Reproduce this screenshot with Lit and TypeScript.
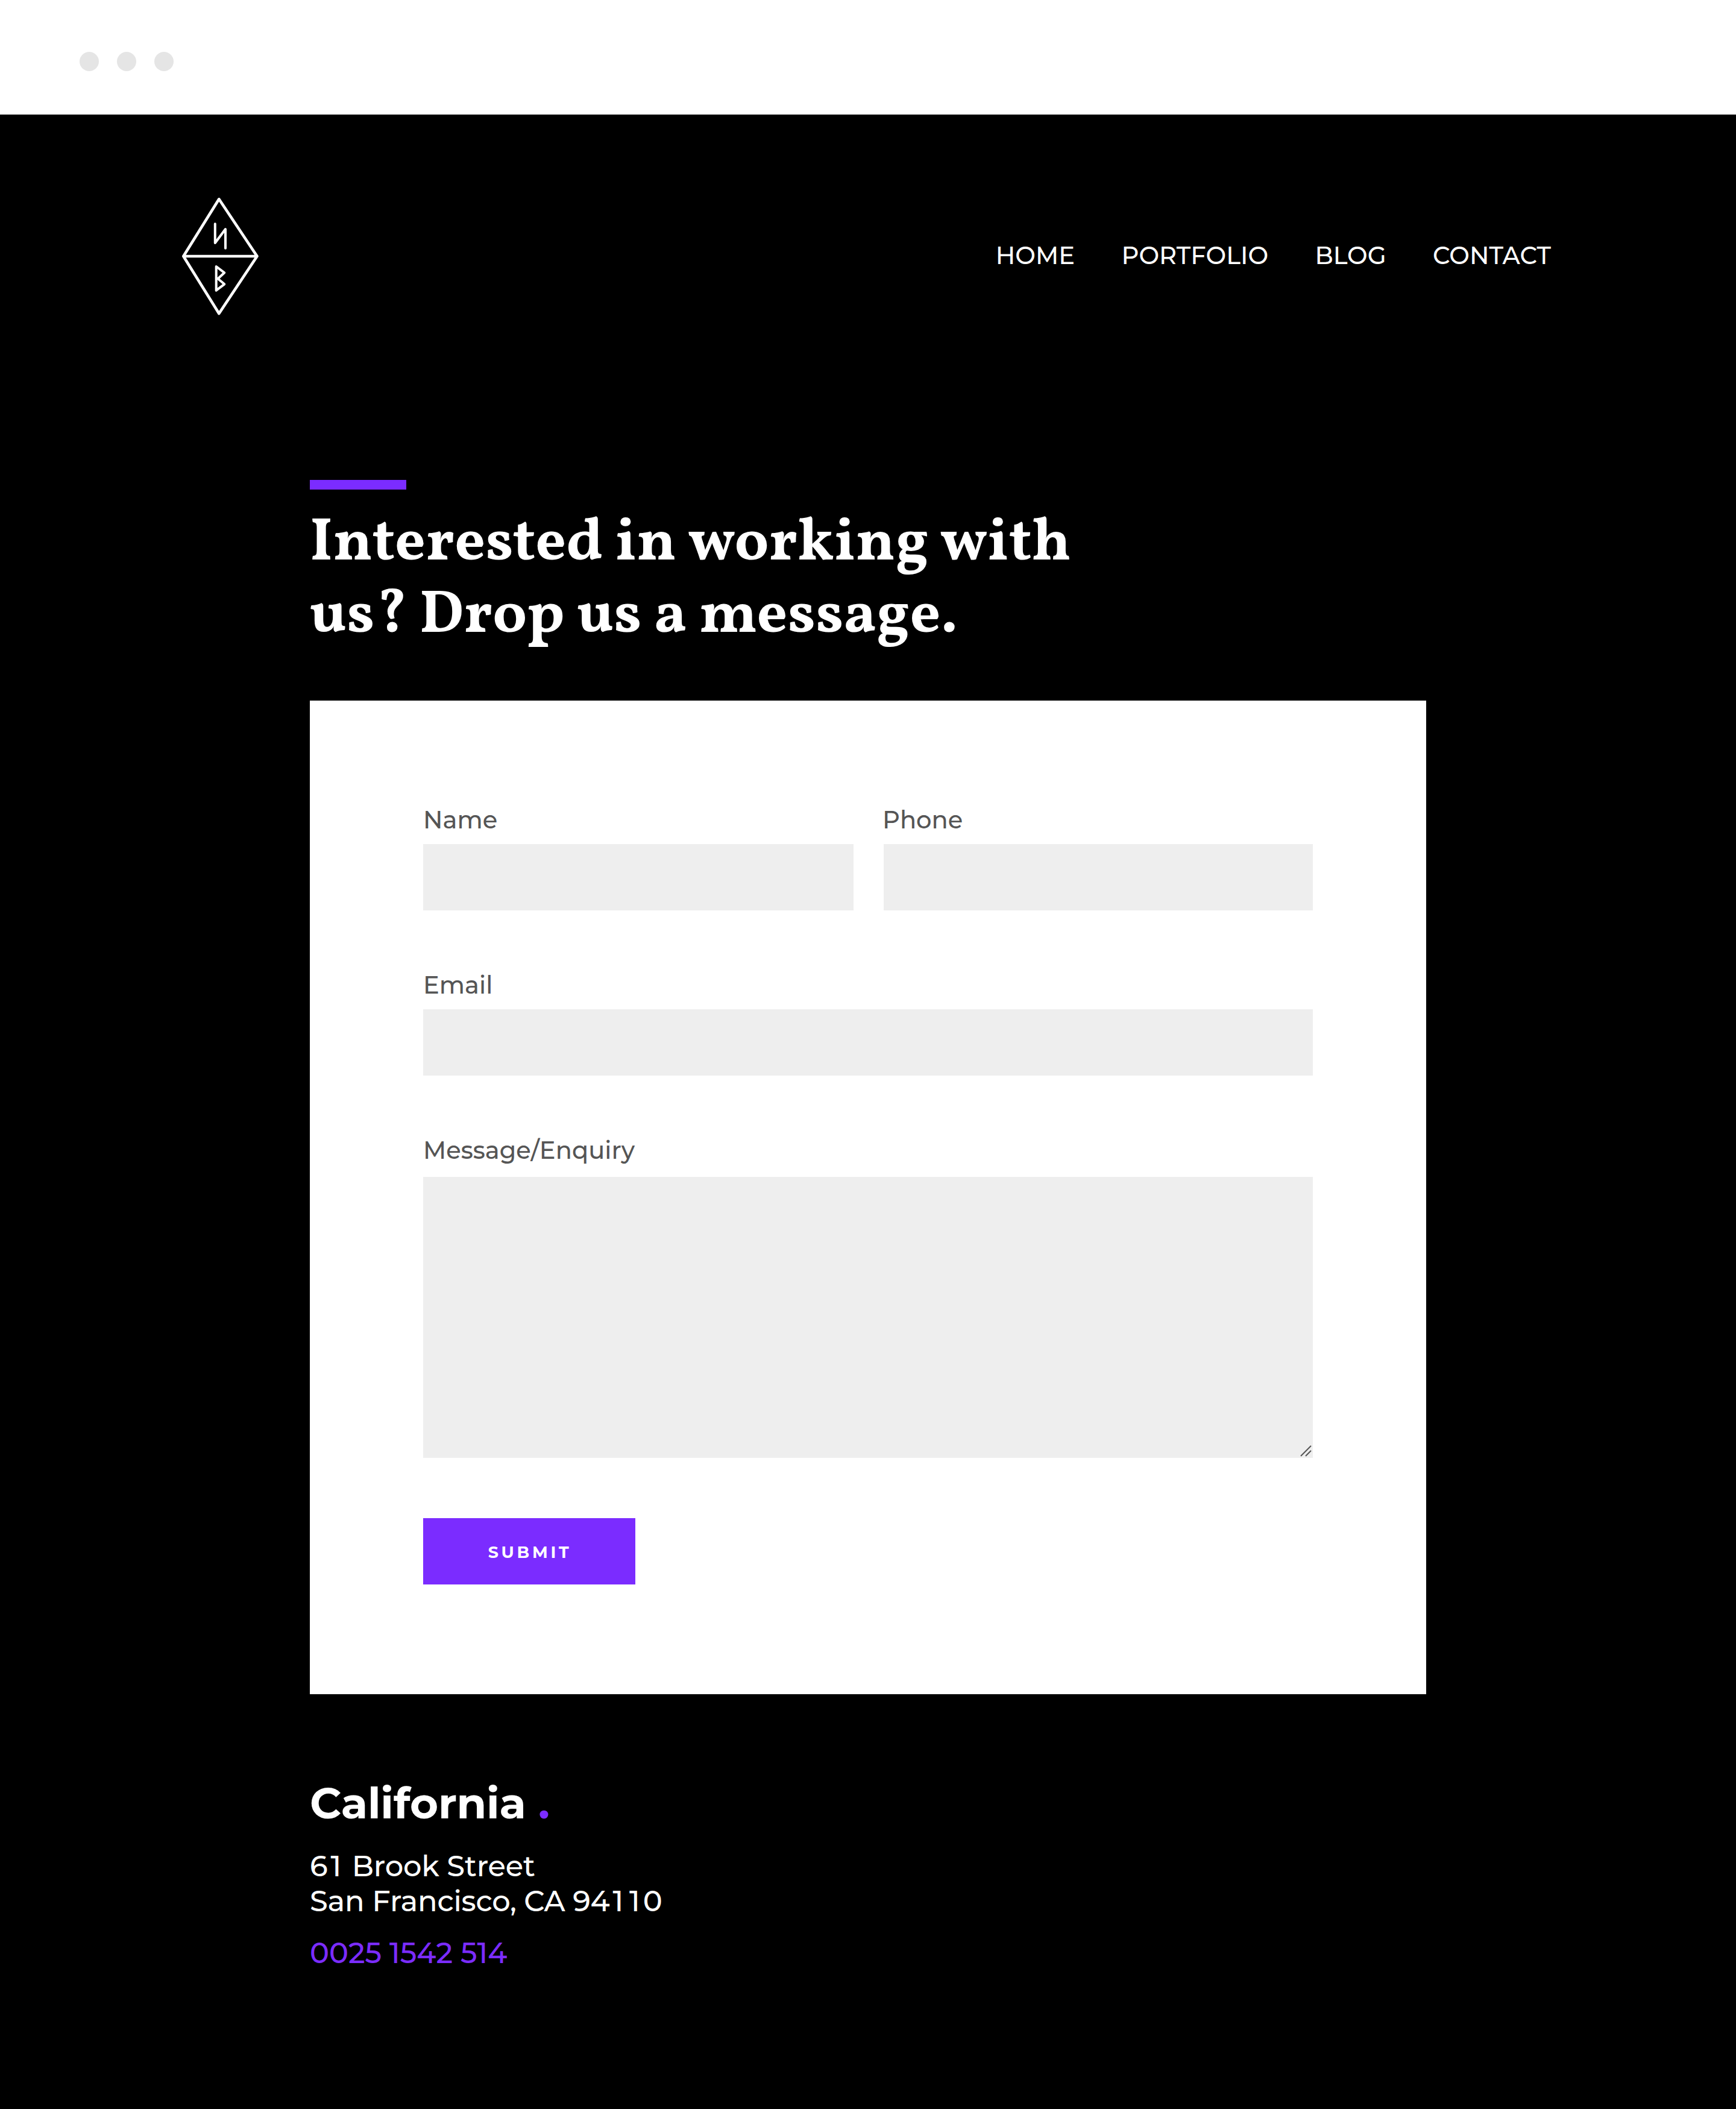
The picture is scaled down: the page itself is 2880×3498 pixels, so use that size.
import { LitElement, html, css, svg } from 'lit';
import { customElement } from 'lit/decorators.js';

const NAV = ['HOME', 'PORTFOLIO', 'BLOG', 'CONTACT'];

const logo = svg`
  <svg class="logo" viewBox="300 325 132 200" fill="none" stroke="#fff" stroke-linecap="round" stroke-linejoin="round">
    <path stroke-width="4.6" d="M363.3 330.3 L426.5 425 L363.3 520 L304.3 425 Z M304.3 425 H426.5"/>
    <path stroke-width="4" d="M356.8 371.3 V403 L374 380 V411.8"/>
    <path stroke-width="4" d="M358.7 442 L372.3 452.3 L361.5 462.3 L372.3 471.3 L358.7 481.7 Z"/>
  </svg>`;

/** The digit one carries extra side bearing in the address block. */
const spaced = (text: string) =>
  text.split(/(1)/).map((part) => (part === '1' ? html`<span class="one">1</span>` : part));

@customElement('app-root')
export class AppRoot extends LitElement {
  static styles = css`
    :host { display: block; font-family: Montserrat, Inter, sans-serif; font-weight: 500; }
    * { box-sizing: border-box; margin: 0; }
    .page { height: 3498px; background: #000; color: #fff; }
    .chrome { height: 190px; background: #fff; display: flex; gap: 30px; padding: 86px 0 0 132px; }
    .dot { width: 32px; height: 32px; border-radius: 50%; background: #e5e5e5; }
    .header { height: 606px; display: flex; align-items: flex-start; justify-content: space-between; padding: 135px 307px 0 300px; }
    .logo { width: 132px; height: 200px; display: block; }
    .nav { display: flex; gap: 77.3px; margin-top: 75px; font-size: 40px; line-height: 48px; letter-spacing: 0.07px; }
    .content { width: 1852px; margin-left: 514px; }
    .bar { width: 160px; height: 16px; background: #7b2cff; }
    .title { margin-top: 31px; font: 700 100px/120px Vollkorn, "Liberation Serif", serif; letter-spacing: 0.22px; width: 1400px; }
    .card { margin-top: 79px; height: 1648px; background: #fff; padding: 174px 188px 0; color: #555; display: grid; align-content: start; row-gap: 100px; }
    .row { display: grid; grid-template-columns: 714px 712px; gap: 50px; }
    .field { display: block; font-size: 40px; line-height: 48px; }
    .tuck { margin-left: -2px; }
    .input { display: block; margin-top: 16px; height: 110px; width: 100%; background: #eee; border: 0; border-radius: 0; outline: 0; }
    .area { height: 466px; margin-top: 20px; display: flex; align-items: flex-end; justify-content: flex-end; }
    .grip { width: 22px; height: 22px; display: block; }
    .submit { display: block; width: 352px; height: 110px; border: 0; padding: 4px 0 0 2px; background: #7b2cff; color: #fff; font: 700 27px/34px Montserrat, Inter, sans-serif; letter-spacing: 4.7px; }
    .city { margin-top: 136px; font-size: 72px; line-height: 88px; font-weight: 700; letter-spacing: -0.2px; }
    .stop { color: #7b2cff; }
    .address { margin-top: 32px; font-size: 48px; line-height: 58px; letter-spacing: -0.2px; }
    .one { padding: 0 5px; }
    .phone { margin-top: 28px; font-size: 48px; line-height: 58px; color: #7b2cff; }
  `;

  render() {
    return html`
      <div class="page">
        <div class="chrome"><span class="dot"></span><span class="dot"></span><span class="dot"></span></div>
        <header class="header">
          ${logo}
          <nav class="nav">${NAV.map((n) => html`<span>${n}</span>`)}</nav>
        </header>
        <main class="content">
          <div class="bar"></div>
          <h1 class="title">Interested in working with<br>us? Drop us a message.</h1>
          <form class="card">
            <div class="row">
              <label class="field"><span>Name</span><input class="input"></label>
              <label class="field"><span class="tuck">Phone</span><input class="input"></label>
            </div>
            <label class="field"><span>Email</span><input class="input"></label>
            <label class="field"><span>Message/Enquiry</span>
              <div class="input area">
                <svg class="grip" viewBox="0 0 22 22" stroke="#555" stroke-width="2" fill="none"><path d="M2 19 L19 2 M10 19 L19 10"/></svg>
              </div>
            </label>
            <button class="submit" type="button">SUBMIT</button>
          </form>
          <h2 class="city">California <span class="stop">.</span></h2>
          <p class="address">${spaced('61 Brook Street')}<br>${spaced('San Francisco, CA 94110')}</p>
          <p class="phone">0025 1542 514</p>
        </main>
      </div>`;
  }
}
